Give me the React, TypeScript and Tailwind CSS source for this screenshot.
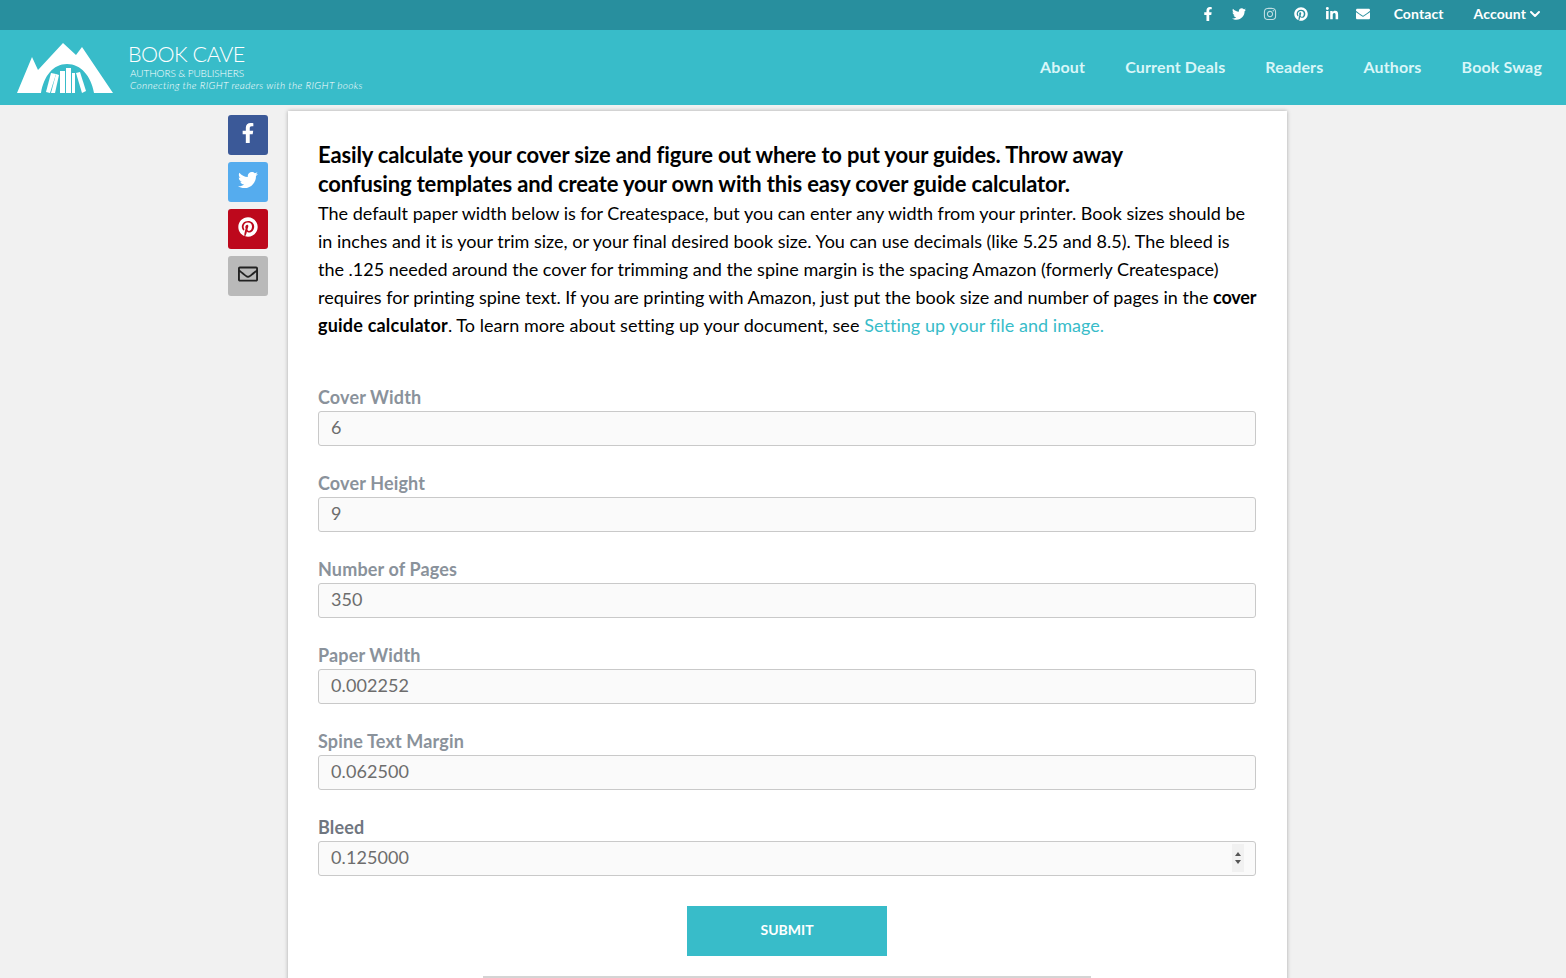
import { ChevronDown } from "lucide-react";
import {
  FaEnvelope,
  FaFacebookF,
  FaInstagram,
  FaLinkedinIn,
  FaPinterest,
  FaRegEnvelope,
  FaTwitter,
} from "react-icons/fa";

const fields = [
  { label: "Cover Width", value: "6" },
  { label: "Cover Height", value: "9" },
  { label: "Number of Pages", value: "350" },
  { label: "Paper Width", value: "0.002252" },
  { label: "Spine Text Margin", value: "0.062500" },
  { label: "Bleed", value: "0.125000" },
];

function Logo() {
  return (
    <svg width="96" height="50" viewBox="0 0 96 50" className="shrink-0">
      <path
        fill="#fff"
        fillRule="evenodd"
        d="M0 50 L15 14 L21 27 L46 0 L59 12 L65 4 L96 50 L77 50 C74 33 64 21 50 21 C36 21 27 33 24 50 Z"
      />
      <path fill="#fff" d="M34 30 L39 31 L33 50 L29 49 Z" />
      <path fill="#fff" d="M39 31 L42 32 L38 50 L34 50 Z" />
      <rect x="43" y="28" width="5" height="22" fill="#fff" />
      <rect x="49" y="25" width="5" height="25" fill="#fff" />
      <rect x="55" y="30" width="3" height="20" fill="#fff" />
      <path fill="#fff" d="M59 30 L63 29 L69 48 L65 50 Z" />
    </svg>
  );
}

export default function App() {
  return (
    <div className="h-[978px] overflow-hidden bg-[#f1f1f1] font-['Lato',sans-serif] text-black [font-variant-ligatures:none]">
      <div className="flex h-[30px] items-center justify-end bg-[#288f9e] pb-[3px] pr-[23px] text-white">
        <div className="flex items-center gap-[15px] text-[14px]">
          <FaFacebookF className="w-[16px] text-[14px]" />
          <FaTwitter className="w-[16px] text-[14px]" />
          <FaInstagram className="w-[16px] text-[14px] opacity-70" />
          <FaPinterest className="w-[16px] text-[14px]" />
          <FaLinkedinIn className="w-[16px] text-[14px]" />
          <FaEnvelope className="w-[16px] text-[14px]" />
        </div>
        <span className="ml-[23px] text-[14px] font-bold tracking-[0.1px]">Contact</span>
        <span className="ml-[30px] flex items-center gap-[1px] text-[14px] font-bold tracking-[0.1px]">
          Account
          <ChevronDown className="h-[16px] w-[16px]" strokeWidth={3} />
        </span>
      </div>

      <header className="flex h-[75px] items-center justify-between bg-[#38bcc9] pl-[17px] pr-6 text-white">
        <div className="flex items-center">
          <Logo />
          <div className="ml-[16px] flex flex-col pb-[2px]">
            <span className="ml-[-1px] text-[21.5px] leading-[22px] tracking-[-0.5px] font-light">BOOK CAVE</span>
            <span className="ml-[1px] mt-[2px] text-[10px] leading-[12px] font-light tracking-[-0.1px]">
              AUTHORS &amp; PUBLISHERS
            </span>
            <span className="ml-[1px] text-[10px] leading-[12px] font-light italic tracking-[0.36px]">
              Connecting the RIGHT readers with the RIGHT books
            </span>
          </div>
        </div>
        <nav className="flex items-center gap-10 pb-[2px] text-[16px] font-bold tracking-[0.15px] text-[#d9f6f8]">
          <a>About</a>
          <a>Current Deals</a>
          <a>Readers</a>
          <a>Authors</a>
          <a>Book Swag</a>
        </nav>
      </header>

      <div className="ml-[228px] flex items-start gap-5">
        <div className="mt-[10px] flex w-10 flex-col gap-[7px] text-[20px]">
          <div className="flex h-10 items-center justify-center rounded-[3px] bg-[#3b5998] pb-1 text-white">
            <FaFacebookF />
          </div>
          <div className="flex h-10 items-center justify-center rounded-[3px] bg-[#55acee] pb-1 text-white">
            <FaTwitter />
          </div>
          <div className="flex h-10 items-center justify-center rounded-[3px] bg-[#bd081c] pb-1 text-white">
            <FaPinterest />
          </div>
          <div className="flex h-10 items-center justify-center rounded-[3px] bg-[#b9b9b9] pb-1 text-[#222]">
            <FaRegEnvelope />
          </div>
        </div>

        <main className="mt-[6px] w-[999px] bg-white pb-10 pl-[30px] pr-[31px] pt-[29px] shadow-[0_0_4px_rgba(0,0,0,0.3)]">
          <h1 className="max-w-[820px] text-[22px] leading-[29px] font-bold tracking-[-0.15px]">
            Easily calculate your cover size and figure out where to put your guides. Throw away confusing templates and
            create your own with this easy cover guide calculator.
          </h1>
          <p className="mr-[-2px] pt-[1px] text-[18px] leading-[28px]">
            The default paper width below is for Createspace, but you can enter any width from your printer. Book sizes
            should be in inches and it is your trim size, or your final desired book size. You can use decimals (like
            5.25 and 8.5). The bleed is the .125 needed around the cover for trimming and the spine margin is the
            spacing Amazon (formerly Createspace) requires for printing spine text. If you are printing with Amazon,
            just put the book size and number of pages in the <strong className="tracking-[-0.2px]">cover</strong>{" "}
            <strong className="tracking-[0.2px]">guide calculator</strong>
            <span className="tracking-[0.05px]">. To learn more about setting up your document, see </span>
            <a className="tracking-[0.05px] text-[#38bcc9]">Setting up your file and image.</a>
          </p>

          <form className="mt-[47px] flex flex-col gap-[26px]">
            {fields.map((field) => (
              <label key={field.label} className="block">
                <span
                  className={`block text-[18px] leading-[22px] font-bold tracking-[0.15px] ${
                    field.label === "Bleed" ? "text-[#6f7680]" : "text-[#8a929b]"
                  }`}
                >
                  {field.label}
                </span>
                <span className="relative mt-[3px] block">
                  <input
                    readOnly
                    value={field.value}
                    className="block h-[35px] w-full rounded-[3px] border border-[#c9c9c9] bg-[#fafafa] px-3 pb-[4px] text-[18px] tracking-[0.1px] text-[#6d6d6d]"
                  />
                  {field.label === "Bleed" && (
                    <span className="absolute right-[12px] top-[3px] flex h-[28px] w-[12px] flex-col items-center justify-center gap-[4px] bg-[#f1f1f1]">
                      <span className="h-0 w-0 border-x-[3px] border-b-[4px] border-x-transparent border-b-[#555]" />
                      <span className="h-0 w-0 border-x-[3px] border-t-[4px] border-x-transparent border-t-[#555]" />
                    </span>
                  )}
                </span>
              </label>
            ))}
          </form>

          <button className="mx-auto mt-[30px] block h-[50px] w-[200px] bg-[#38bcc9] pb-[3px] text-[14px] font-bold text-white">
            SUBMIT
          </button>
          <div className="mx-auto mt-5 w-[608px] border-t-2 border-[#d4d4d4]" />
        </main>
      </div>
    </div>
  );
}
